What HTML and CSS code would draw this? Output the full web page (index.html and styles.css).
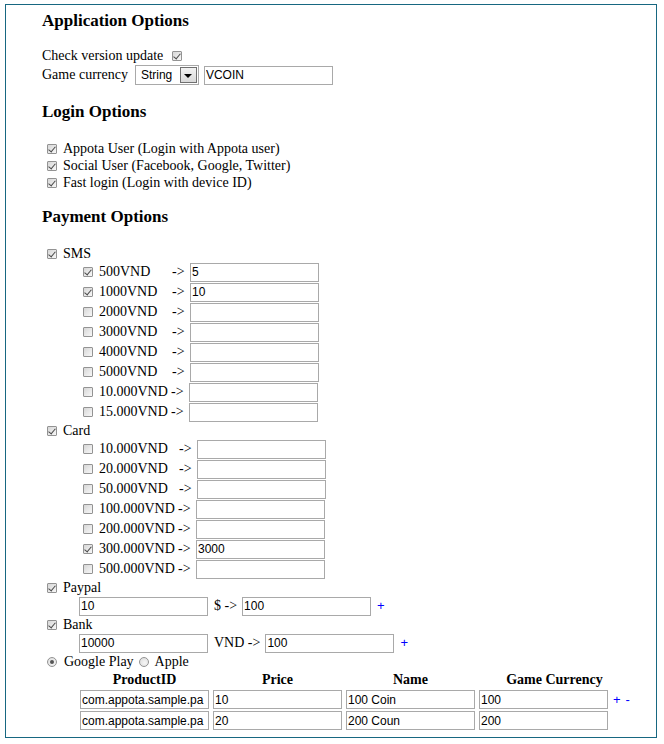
FILE: index.html
```html
<!DOCTYPE html>
<html>
<head>
<meta charset="utf-8">
<title>Options</title>
<link rel="stylesheet" href="styles.css">
</head>
<body>
<div class="panel">
  <h3 class="title t-app">Application Options</h3>
  <div class="row h18 mt16"><span>Check version update</span><input type="checkbox" class="cb cb-after" checked></div>
  <div class="row h20">
    <span>Game currency</span>
    <div class="select"><span class="sel-value">String</span><span class="sel-btn"><span class="sel-arrow"></span></span></div>
    <input type="text" class="txt ml-cur" value="VCOIN">
  </div>

  <h3 class="title t-login">Login Options</h3>
  <div class="list mt18">
    <label class="row h17"><input type="checkbox" class="cb" checked><span>Appota User (Login with Appota user)</span></label>
    <label class="row h17"><input type="checkbox" class="cb" checked><span>Social User (Facebook, Google, Twitter)</span></label>
    <label class="row h17"><input type="checkbox" class="cb" checked><span>Fast login (Login with device ID)</span></label>
  </div>

  <h3 class="title t-pay">Payment Options</h3>
  <div class="payments mt18">
    <label class="row h17"><input type="checkbox" class="cb" checked><span>SMS</span></label>
    <div class="sub">
      <div class="row h20"><input type="checkbox" class="cb" checked><span class="lbl lbl-sms">500VND</span><span class="to">-&gt;</span><input type="text" class="txt" value="5"></div>
      <div class="row h20"><input type="checkbox" class="cb" checked><span class="lbl lbl-sms">1000VND</span><span class="to">-&gt;</span><input type="text" class="txt" value="10"></div>
      <div class="row h20"><input type="checkbox" class="cb"><span class="lbl lbl-sms">2000VND</span><span class="to">-&gt;</span><input type="text" class="txt" value=""></div>
      <div class="row h20"><input type="checkbox" class="cb"><span class="lbl lbl-sms">3000VND</span><span class="to">-&gt;</span><input type="text" class="txt" value=""></div>
      <div class="row h20"><input type="checkbox" class="cb"><span class="lbl lbl-sms">4000VND</span><span class="to">-&gt;</span><input type="text" class="txt" value=""></div>
      <div class="row h20"><input type="checkbox" class="cb"><span class="lbl lbl-sms">5000VND</span><span class="to">-&gt;</span><input type="text" class="txt" value=""></div>
      <div class="row h20"><input type="checkbox" class="cb"><span class="lbl lbl-sms">10.000VND</span><span class="to to-tight">-&gt;</span><input type="text" class="txt" value=""></div>
      <div class="row h20"><input type="checkbox" class="cb"><span class="lbl lbl-sms">15.000VND</span><span class="to to-tight">-&gt;</span><input type="text" class="txt" value=""></div>
    </div>

    <label class="row h17"><input type="checkbox" class="cb" checked><span>Card</span></label>
    <div class="sub">
      <div class="row h20"><input type="checkbox" class="cb"><span class="lbl lbl-card">10.000VND</span><span class="to">-&gt;</span><input type="text" class="txt" value=""></div>
      <div class="row h20"><input type="checkbox" class="cb"><span class="lbl lbl-card">20.000VND</span><span class="to">-&gt;</span><input type="text" class="txt" value=""></div>
      <div class="row h20"><input type="checkbox" class="cb"><span class="lbl lbl-card">50.000VND</span><span class="to">-&gt;</span><input type="text" class="txt" value=""></div>
      <div class="row h20"><input type="checkbox" class="cb"><span class="lbl lbl-card">100.000VND</span><span class="to to-tight">-&gt;</span><input type="text" class="txt" value=""></div>
      <div class="row h20"><input type="checkbox" class="cb"><span class="lbl lbl-card">200.000VND</span><span class="to to-tight">-&gt;</span><input type="text" class="txt" value=""></div>
      <div class="row h20"><input type="checkbox" class="cb" checked><span class="lbl lbl-card">300.000VND</span><span class="to to-tight">-&gt;</span><input type="text" class="txt" value="3000"></div>
      <div class="row h20"><input type="checkbox" class="cb"><span class="lbl lbl-card">500.000VND</span><span class="to to-tight">-&gt;</span><input type="text" class="txt" value=""></div>
    </div>

    <label class="row h17"><input type="checkbox" class="cb" checked><span>Paypal</span></label>
    <div class="row h20 rate">
      <input type="text" class="txt" value="10"><span class="unit">$ -&gt;</span><input type="text" class="txt" value="100"><span class="op">+</span>
    </div>

    <label class="row h17"><input type="checkbox" class="cb" checked><span>Bank</span></label>
    <div class="row h20 rate">
      <input type="text" class="txt" value="10000"><span class="unit">VND -&gt;</span><input type="text" class="txt" value="100"><span class="op">+</span>
    </div>

    <div class="row h17">
      <input type="radio" name="store" class="rd" checked><span>Google Play</span>
      <input type="radio" name="store" class="rd rd-second"><span>Apple</span>
    </div>

    <div class="products">
      <div class="th">ProductID</div>
      <div class="th">Price</div>
      <div class="th">Name</div>
      <div class="th th-wide">Game Currency</div>
      <input type="text" class="txt" value="com.appota.sample.pa">
      <input type="text" class="txt" value="10">
      <input type="text" class="txt" value="100 Coin">
      <input type="text" class="txt" value="100">
      <div class="ops"><span class="op-small">+</span><span class="op-small minus">-</span></div>
      <input type="text" class="txt" value="com.appota.sample.pa">
      <input type="text" class="txt" value="20">
      <input type="text" class="txt" value="200 Coun">
      <input type="text" class="txt" value="200">
    </div>
  </div>
</div>
</body>
</html>
```

FILE: styles.css
```css
* {
  box-sizing: border-box;
}

body {
  margin: 0;
  background: #ffffff;
  color: #000000;
  font-family: "Liberation Serif", "Times New Roman", serif;
  font-size: 14px;
}

.panel {
  margin: 4px 0 0 5px;
  width: 652px;
  height: 734px;
  border: 1px solid #176781;
  padding: 0 0 0 36px;
  overflow: hidden;
}

.title {
  margin: 0;
  font-size: 17px;
  line-height: 20px;
  font-weight: bold;
}

.t-app { margin-top: 6px; }
.t-login { margin-top: 17px; }
.t-pay { margin-top: 16px; }

.mt16 { margin-top: 16px; }
.mt18 { margin-top: 18px; }

.row {
  display: flex;
  align-items: center;
  line-height: 16px;
  white-space: nowrap;
}

.h17 { height: 17px; }
.h18 { height: 18px; }
.h20 { height: 20px; }

/* checkbox */
.cb {
  -webkit-appearance: none;
  appearance: none;
  position: relative;
  flex: none;
  width: 10px;
  height: 10px;
  margin: 0 6px 0 5px;
  border: 1px solid #939393;
  border-radius: 1px;
  background: linear-gradient(135deg, #d6d6d6 0%, #e9e9e9 55%, #f7f7f7 100%);
}

.cb:checked::after {
  content: "";
  position: absolute;
  left: 2px;
  top: 0;
  width: 3px;
  height: 6px;
  border: solid #4a4a4a;
  border-width: 0 1.6px 1.6px 0;
  transform: rotate(40deg);
}

.cb-after {
  margin: 0 0 0 9px;
}

/* radio */
.rd {
  -webkit-appearance: none;
  appearance: none;
  position: relative;
  flex: none;
  width: 10px;
  height: 10px;
  margin: 0 7px 0 5px;
  border: 1px solid #939393;
  border-radius: 50%;
  background: radial-gradient(circle at 60% 60%, #f6f6f6 0%, #dadada 100%);
}

.rd:checked::after {
  content: "";
  position: absolute;
  left: 2px;
  top: 2px;
  width: 4px;
  height: 4px;
  border-radius: 50%;
  background: #555555;
}

.rd-second {
  margin: 0 6px 0 5px;
}

/* text inputs */
.txt {
  flex: none;
  width: 129px;
  height: 19px;
  margin: 0;
  padding: 0 1px;
  border: 1px solid #a9a9a9;
  border-radius: 0;
  background: #ffffff;
  color: #000000;
  font-family: "Liberation Sans", Arial, sans-serif;
  font-size: 12px;
  outline: none;
}

.ml-cur { margin-left: 5px; }

/* fake select */
.select {
  display: flex;
  align-items: center;
  flex: none;
  width: 64px;
  height: 20px;
  margin-left: 7px;
  padding: 0 1px 0 5px;
  border: 1px solid #a9a9a9;
  background: #ffffff;
  font-family: "Liberation Sans", Arial, sans-serif;
  font-size: 12px;
}

.sel-value {
  flex: 1;
}

.sel-btn {
  display: flex;
  align-items: center;
  justify-content: center;
  width: 17px;
  height: 16px;
  border: 1px solid #707070;
  background: linear-gradient(#f2f2f2, #d9d9d9);
}

.sel-arrow {
  width: 0;
  height: 0;
  border-left: 4px solid transparent;
  border-right: 4px solid transparent;
  border-top: 4px solid #000000;
  margin-top: 1px;
}

/* payment sub rows */
.sub {
  padding-left: 36px;
}

.lbl-sms { width: 73px; }
.lbl-card { width: 80px; }

.to {
  width: 18px;
  flex: none;
}

.to-tight {
  width: 18px;
  margin-left: -1px;
}

.rate {
  padding-left: 37px;
}

.unit {
  margin: 0 5px 0 6px;
}

.op {
  margin-left: 6px;
  color: #0000ff;
  font-family: "Liberation Sans", Arial, sans-serif;
  font-size: 13px;
}

/* product table */
.products {
  display: grid;
  grid-template-columns: 129px 129px 129px 129px max-content;
  grid-template-rows: 18px 19px 19px;
  justify-content: start;
  column-gap: 4px;
  row-gap: 2px;
  padding-left: 38px;
}

.th {
  align-self: end;
  text-align: center;
  font-weight: bold;
  line-height: 16px;
}

.th-wide {
  grid-column: 4 / span 2;
}

.ops {
  display: flex;
  align-items: center;
  padding-left: 1px;
  color: #0000ff;
  font-family: "Liberation Sans", Arial, sans-serif;
  font-size: 13px;
}

.minus {
  margin-left: 5px;
}
```
